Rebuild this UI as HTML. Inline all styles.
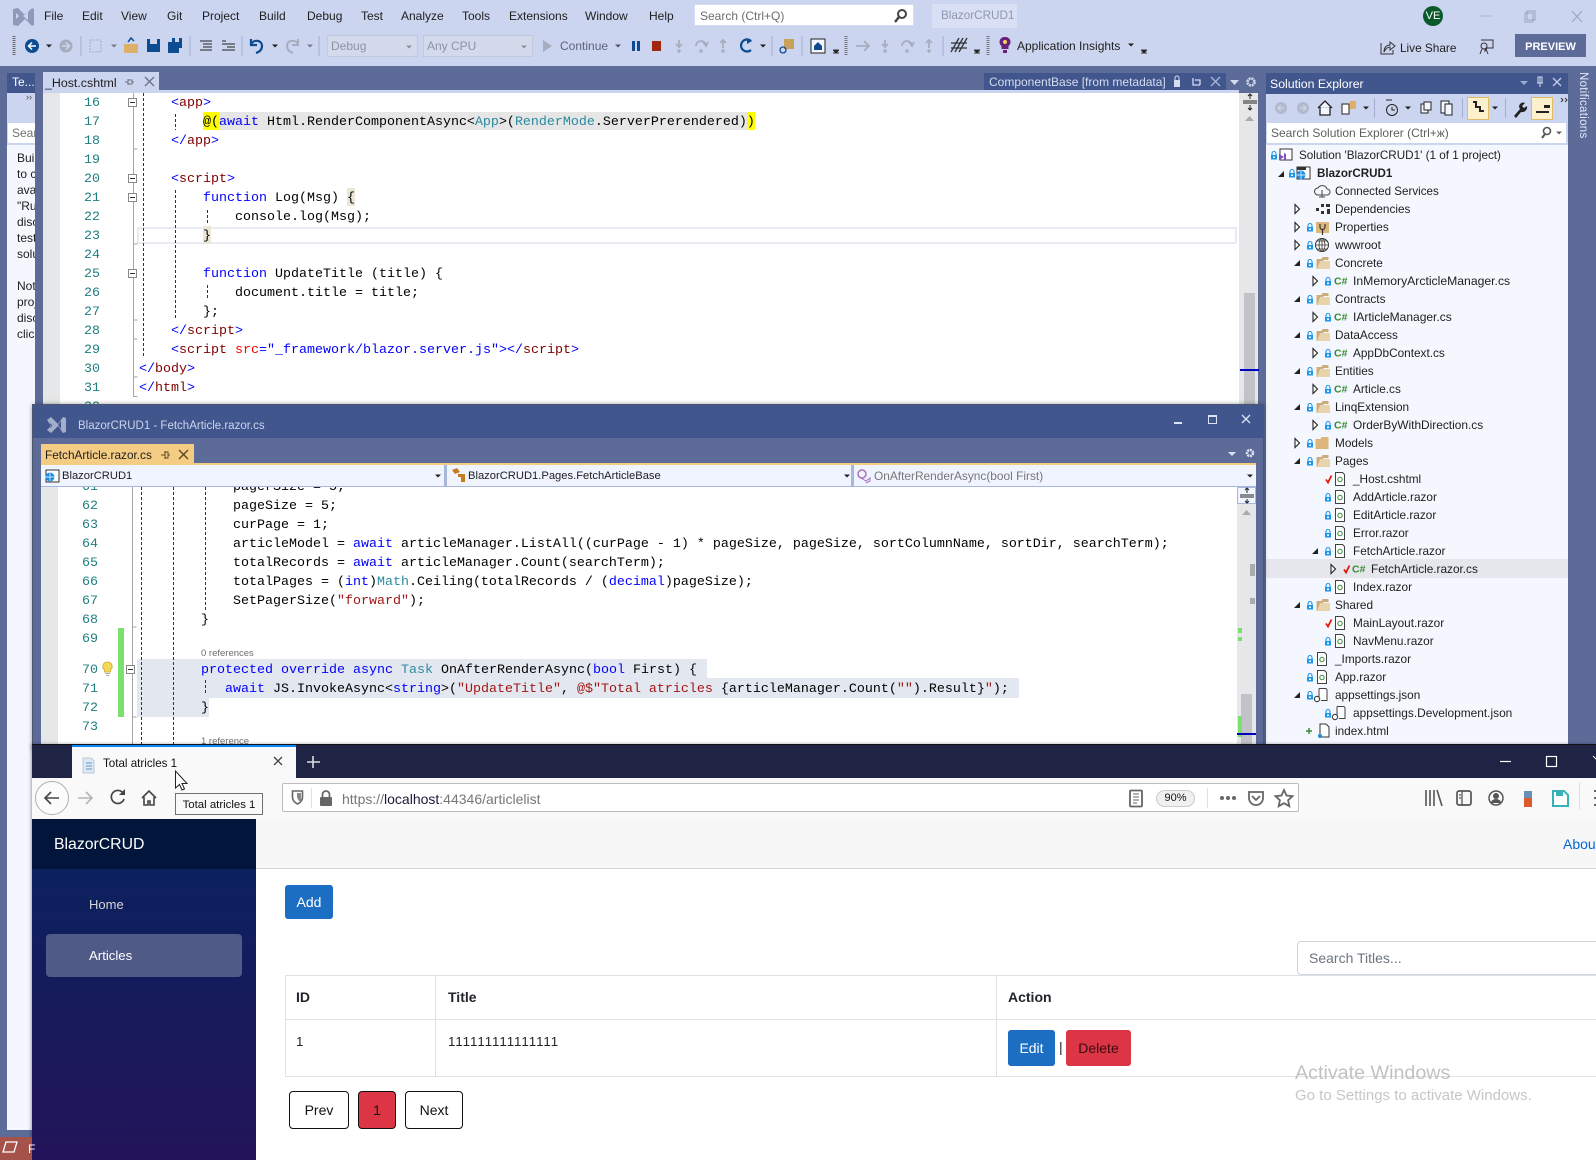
<!DOCTYPE html>
<html><head><meta charset="utf-8"><title>Total atricles 1</title>
<style>
html,body{margin:0;padding:0;width:1596px;height:1160px;overflow:hidden;background:#5d6b99}
body{position:relative;font-family:"Liberation Sans",sans-serif;font-size:12px;color:#1e1e1e}
.a{position:absolute;white-space:nowrap}
.r{position:absolute}
pre{margin:0;position:absolute;font-family:"Liberation Mono",monospace;font-size:13.33px;line-height:19px;color:#000;white-space:pre}
.n{color:#1f7f80;text-align:right}
.b{color:#0000ff}.m{color:#800000}.t{color:#2b8a9f}.s{color:#a31515}.o{color:#ff0000}
.menu{top:8px;line-height:16px;font-size:12px}
.row{position:absolute;line-height:18px;height:18px;font-size:11.8px;color:#1e1e1e;white-space:nowrap}
svg{position:absolute;left:0;top:0;overflow:visible}
.btn{position:absolute;box-sizing:border-box;text-align:center;font-size:14px}
</style></head><body>

<svg width="0" height="0" style="position:absolute">
<defs>
<symbol id="lk" overflow="visible"><path d="M-2 -1V-2.500a2 2 0 0 1 4 0V-1" fill="none" stroke="#1c97ea" stroke-width="1.100"/><rect x="-3" y="-1" width="6" height="4.500" fill="#1c97ea"/><rect x="-1" y="0.500" width="2" height="1.500" fill="#fff"/></symbol>
<symbol id="fo" overflow="visible"><path d="M-6.500 6V-4h5l1 -2h6v3h-5l-4 9z" fill="#c9ad7c"/><path d="M-6 6l3 -8h10v8z" fill="#e9d3ab"/></symbol>
<symbol id="fc" overflow="visible"><path d="M-6.500 6V-4h5l1 -2h7v12z" fill="#dcb67a"/></symbol>
<symbol id="fr" overflow="visible"><path d="M-4.500 -6.500h7l2 2v11h-9z" fill="#fff" stroke="#424242" stroke-width="1"/><circle cx="0" cy="0.500" r="2.200" fill="none" stroke="#388a34" stroke-width="1"/></symbol>
<symbol id="ao" overflow="visible"><path d="M3 -3v6h-6z" fill="#222"/></symbol>
<symbol id="ac" overflow="visible"><path d="M-2 -4.500l4.500 4.500l-4.500 4.500z" fill="#fff" stroke="#222" stroke-width="1.100"/></symbol>
<symbol id="ck" overflow="visible"><path d="M-3 0.500l2 3l3.500 -7" fill="none" stroke="#e51400" stroke-width="1.700"/></symbol>
<symbol id="dn" overflow="visible"><path d="M-3 -1.500h6l-3 3z" fill="#1e1e1e"/></symbol>
<symbol id="js" overflow="visible"><path d="M-3 -6.500h6q2 0 2 2v10h-6" fill="#fff" stroke="#424242"/><path d="M-3 -6.500v9" fill="none" stroke="#424242"/><circle cx="-5" cy="4" r="2.600" fill="#fff" stroke="#424242" stroke-width="1.200"/></symbol>
</defs>
</svg>

<!-- top chrome -->
<div class="r" style="left:0;top:0;width:1596px;height:66px;background:#ccd5f0"></div>
<div class="r" style="left:694px;top:4px;width:220px;height:22px;background:#fff;box-sizing:border-box;border:1px solid #d5dcef"></div>
<div class="r" style="left:932px;top:4px;width:85px;height:24px;background:#d9e0f6"></div>
<div class="a menu" style="left:44px">File</div>
<div class="a menu" style="left:82px">Edit</div>
<div class="a menu" style="left:121px">View</div>
<div class="a menu" style="left:167px">Git</div>
<div class="a menu" style="left:202px">Project</div>
<div class="a menu" style="left:259px">Build</div>
<div class="a menu" style="left:307px">Debug</div>
<div class="a menu" style="left:361px">Test</div>
<div class="a menu" style="left:401px">Analyze</div>
<div class="a menu" style="left:462px">Tools</div>
<div class="a menu" style="left:509px">Extensions</div>
<div class="a menu" style="left:585px">Window</div>
<div class="a menu" style="left:649px">Help</div>
<div class="a menu" style="left:700px;color:#6d6d6d">Search (Ctrl+Q)</div>
<div class="a menu" style="left:941px;color:#8f97b2;font-size:11.700px">BlazorCRUD1</div>
<div class="r" style="left:1423px;top:6px;width:20px;height:20px;border-radius:50%;background:#0b5a2b;color:#fff;text-align:center;line-height:20px;font-size:11px">VE</div>
<div class="r" style="left:327px;top:35px;width:91px;height:22px;box-sizing:border-box;background:#d3daeb;border:1px solid #c2c9da"></div>
<div class="r" style="left:423px;top:35px;width:110px;height:22px;box-sizing:border-box;background:#d3daeb;border:1px solid #c2c9da"></div>
<div class="a menu" style="left:331px;top:38px;color:#8e94a6">Debug</div>
<div class="a menu" style="left:427px;top:38px;color:#8e94a6">Any CPU</div>
<div class="a menu" style="left:560px;top:38px;color:#5d6379">Continue</div>
<div class="a menu" style="left:1017px;top:38px">Application Insights</div>
<div class="a menu" style="left:1400px;top:40px;font-size:11.800px">Live Share</div>
<div class="r" style="left:1515px;top:34px;width:71px;height:23px;background:#5d6b99;color:#fff;font-weight:bold;font-size:11px;text-align:center;line-height:26px">PREVIEW</div>

<svg width="1596" height="66">
 <path d="M12 9l5 -1l7 7l7 -7l2 1v16l-2 1l-7 -7l-7 7l-5 -1zM15 13v6l3 -3zM27 12l-5 4l5 4z" fill="#8f9abb" fill-rule="evenodd" transform="translate(1 0)"/>
 <circle cx="902" cy="14" r="4" fill="none" stroke="#444" stroke-width="2"/><path d="M899 17l-4 5" stroke="#444" stroke-width="2.400"/>
 <path d="M1480 16h11" stroke="#aab2cc"/><rect x="1525" y="13" width="8" height="9" fill="none" stroke="#9aa3c0"/><rect x="1527" y="11" width="8" height="9" fill="none" stroke="#9aa3c0"/><path d="M1572 11l10 11M1582 11l-10 11" stroke="#9aa3c0"/>
 <path d="M14 36v20" stroke="#666" stroke-dasharray="1 1" stroke-width="3"/>
 <circle cx="32" cy="46" r="7" fill="#0e4c92"/><path d="M36 46h-7M32 42.500l-3.500 3.500l3.500 3.500" fill="none" stroke="#fff" stroke-width="1.500"/>
 <use href="#dn" x="49" y="46"/>
 <circle cx="66" cy="46" r="6.500" fill="#a6adbf"/><path d="M62 46h7M66 42.500l3.500 3.500l-3.500 3.500" fill="none" stroke="#ccd5f0" stroke-width="1.500"/>
 <path d="M81 36v20M190 36v20M242 36v20M319 36v20M772 36v20M802 36v20M943 36v20" stroke="#a5add0"/>
 <rect x="90" y="40" width="11" height="12" fill="none" stroke="#a6adbf" stroke-dasharray="2 1"/>
 <use href="#dn" x="114" y="46" opacity=".5"/>
 <path d="M124 44h14v9h-14z" fill="#dcb067"/><path d="M128 42l3 -4l3 3" fill="none" stroke="#0e4c92" stroke-width="1.500"/>
 <rect x="147" y="39" width="13" height="13" fill="#0e4c92"/><rect x="150" y="39" width="7" height="5" fill="#ccd5f0"/>
 <rect x="168" y="42" width="11" height="11" fill="#0e4c92"/><rect x="172" y="38" width="10" height="10" fill="#0e4c92"/><rect x="175" y="38" width="4" height="4" fill="#ccd5f0"/>
 <path d="M200 41h12M203 44h9M203 47h9M200 50h12M222 41h4M222 44h13M227 47h8M222 50h13" stroke="#222" stroke-width="1.100"/>
 <path d="M251 39v6h6M251 44c3 -5 11 -4 11 2c0 4 -3 6 -6 7" fill="none" stroke="#0e4c92" stroke-width="2.200"/>
 <use href="#dn" x="275" y="46"/>
 <path d="M298 39v6h-6M298 44c-3 -5 -11 -4 -11 2c0 4 3 6 6 7" fill="none" stroke="#a6adbf" stroke-width="2"/>
 <use href="#dn" x="310" y="46" opacity=".5"/>
 <use href="#dn" x="409" y="47" opacity=".4"/><use href="#dn" x="524" y="47" opacity=".4"/>
 <path d="M543 40l9 6l-9 6z" fill="#a6adbf"/><use href="#dn" x="618" y="46" opacity=".7"/>
 <path d="M632 41h3v10h-3zM637 41h3v10h-3z" fill="#0e4c92"/>
 <rect x="652" y="41" width="9" height="10" fill="#a1260d"/>
 <path d="M679 40v7M676 44l3 3l3 -3M696 46a5 5 0 1 1 10 0M703 42l3 4l2 -4M723 48v-8M720 43l3 -3l3 3" stroke="#a6adbf" stroke-width="1.800" fill="none"/><circle cx="679" cy="51" r="1.700" fill="#a6adbf"/><circle cx="701" cy="51" r="1.700" fill="#a6adbf"/><circle cx="723" cy="51" r="1.700" fill="#a6adbf"/>
 <path d="M751 41a6 6 0 1 0 0 9" fill="none" stroke="#0e4c92" stroke-width="2.200"/><path d="M747 38l5 3l-5 3z" fill="#0e4c92"/>
 <use href="#dn" x="763" y="46"/>
 <rect x="784" y="39" width="10" height="10" fill="#c9a15a"/><circle cx="783" cy="50" r="3" fill="none" stroke="#0e4c92" stroke-width="1.300"/>
 <rect x="811" y="39" width="14" height="14" fill="#f3f6ff" stroke="#222"/><path d="M814 46l4 -4l4 4v4h-8z" fill="#0e4c92"/>
 <path d="M833 50h6M833 53h6" stroke="#333"/><path d="M833 50.500h6l-3 3z" fill="#222"/>
 <path d="M846 36v20M988 36v20" stroke="#777" stroke-dasharray="1 1" stroke-width="3"/>
 <path d="M856 46h13M864 41l5 5l-5 5M885 40v7M882 44l3 3l3 -3M902 46a5 5 0 1 1 10 0M909 42l3 4l2 -4M929 48v-8M926 43l3 -3l3 3" fill="none" stroke="#a6adbf" stroke-width="1.800"/><circle cx="885" cy="51" r="1.700" fill="#a6adbf"/><circle cx="907" cy="51" r="1.700" fill="#a6adbf"/><circle cx="929" cy="51" r="1.700" fill="#a6adbf"/>
 <path d="M951 52l8 -14M955 52l8 -14M959 52l8 -14M951 43h16M951 48h16" stroke="#333" stroke-width="1.300"/>
 <path d="M974 50h6M974 53h6" stroke="#333"/><path d="M974 50.500h6l-3 3z" fill="#222"/>
 <path d="M1005 37a5 5 0 0 1 3.500 9v3h-7v-3a5 5 0 0 1 3.500 -9z" fill="#68217a"/><circle cx="1005" cy="42" r="2" fill="#f0d060"/><rect x="1003" y="50" width="4" height="3" fill="#68217a"/>
 <use href="#dn" x="1131" y="45"/><path d="M1141 50h6M1141 53h6" stroke="#333"/><path d="M1141 50.500h6l-3 3z" fill="#222"/>
 <path d="M1381 43v11h12v-4M1384 52c0 -5 3 -7 6 -7v-3l5 4l-5 4v-3c-2 0 -4 1 -6 5z" fill="none" stroke="#333"/>
 <path d="M1481 40h12v8h-6l-2 3v-3" fill="none" stroke="#333"/><circle cx="1484" cy="46" r="3" fill="#ccd5f0" stroke="#333"/><path d="M1480 54l2 -5M1488 54l-2 -5" stroke="#333"/>
</svg>

<!-- left tool window -->
<div class="r" style="left:7px;top:73px;width:28px;height:20px;background:#40568d;color:#fff;line-height:19px;text-indent:5px;font-size:12px">Te...</div>
<div class="r" style="left:7px;top:93px;width:28px;height:1037px;background:#f5f7ff"></div>
<div class="r" style="left:7px;top:93px;width:28px;height:52px;background:#ccd5f0"></div>
<div class="a" style="left:26px;top:92px;font-size:9px;color:#444">››</div>
<div class="r" style="left:8px;top:123px;width:27px;height:20px;background:#fff;overflow:hidden;color:#717171;line-height:20px;text-indent:4px">Sear</div>
<div class="r" style="left:17px;top:150px;width:18px;overflow:hidden;line-height:16px;font-size:12px;white-space:nowrap">Build<br>to con<br>avail<br>"Run<br>disco<br>test<br>solut<br><br>Note<br>proj<br>disco<br>click</div>

<!-- main editor -->
<div class="r" style="left:43px;top:72px;width:116px;height:20px;background:#ccd5f0"></div>
<div class="a" style="left:45px;top:75px;line-height:16px;font-size:12.400px">_Host.cshtml</div>
<div class="r" style="left:43px;top:90px;width:1196px;height:3px;background:#ccd5f0"></div>
<div class="r" style="left:984px;top:73px;width:242px;height:17px;background:#40568d"></div>
<div class="a" style="left:989px;top:74px;line-height:16px;color:#d5dcf0;font-size:12px">ComponentBase [from metadata]</div>
<div class="r" style="left:43px;top:93px;width:1196px;height:320px;background:#fff"></div>
<div class="r" style="left:43px;top:93px;width:17px;height:320px;background:#e6e7e8"></div>
<div class="r" style="left:1239px;top:93px;width:19px;height:320px;background:#e6e7e8"></div>
<div class="r" style="left:1244px;top:293px;width:11px;height:120px;background:#c2c3c9"></div>
<div class="r" style="left:1240px;top:369px;width:19px;height:2px;background:#0000c0"></div>
<div class="r" style="left:137px;top:227px;width:1100px;height:17px;box-sizing:border-box;border:2px solid #eaeaf2"></div>
<div class="r" style="left:219px;top:112px;width:528px;height:18px;background:#e6e6e6"></div>
<div class="r" style="left:203px;top:112px;width:16px;height:18px;background:#ffff00"></div>
<div class="r" style="left:747px;top:112px;width:8px;height:18px;background:#ffff00"></div>
<div class="r" style="left:347px;top:188px;width:8px;height:18px;background:#ebe6d6"></div>
<div class="r" style="left:203px;top:226px;width:8px;height:18px;background:#ebe6d6"></div>
<svg width="1596" height="420">
 <path d="M133.500 93v304" fill="none" stroke="#a5a5a5"/>
 <path d="M133.500 149h4M133.500 244h4M133.500 320h4M133.500 339h4M133.500 377h4M133.500 396.500h4" fill="none" stroke="#a5a5a5"/>
 <path d="M143.500 93v263M175.500 114v16M175.500 190v128M207.500 210v13M207.500 285v15" fill="none" stroke="#333" stroke-dasharray="3 2"/>
 <g fill="#fff" stroke="#888"><rect x="128.500" y="98.500" width="8" height="8"/><rect x="128.500" y="174.500" width="8" height="8"/><rect x="128.500" y="193.500" width="8" height="8"/><rect x="128.500" y="269.500" width="8" height="8"/></g>
 <path d="M130 102.500h5M130 178.500h5M130 197.500h5M130 273.500h5" stroke="#333"/>
 <path d="M1243 101h14M1243 103h14" stroke="#222"/><path d="M1250 94v5M1250 105v5M1248 96l2 -2l2 2M1248 108l2 2l2 -2" fill="none" stroke="#222"/>
 <path d="M1245 121l4.500 -5l4.500 5z" fill="#aaa"/>
 <path d="M128 79v6M125 82h3M128 80h4v4h-4M132 82h2" fill="none" stroke="#6b7280"/>
 <path d="M145 77l9 9M154 77l-9 9" stroke="#6b7280" stroke-width="1.300"/>
 <rect x="1174" y="80" width="6" height="7" fill="#d5dcf0"/><path d="M1175 80v-2a2 2 0 0 1 4 0v2" fill="none" stroke="#d5dcf0"/>
 <path d="M1193 78v7h7M1195 80h5v5" fill="none" stroke="#d5dcf0" stroke-width="1.300"/><path d="M1211 77l9 9M1220 77l-9 9" stroke="#aab6d8" stroke-width="1.300"/>
 <path d="M1230 80h9l-4.500 5z" fill="#d5dcf0"/>
 <circle cx="1251" cy="82" r="3.500" fill="none" stroke="#d5dcf0" stroke-width="2.500" stroke-dasharray="2 .8"/>
</svg>
<pre class="n" style="left:60px;top:94px;width:40px">16
17
18
19
20
21
22
23
24
25
26
27
28
29
30
31
32</pre>
<pre style="left:139px;top:94px">    <span class="b">&lt;</span><span class="m">app</span><span class="b">&gt;</span>
        @(<span class="b">await</span> Html.RenderComponentAsync&lt;<span class="t">App</span>&gt;(<span class="t">RenderMode</span>.ServerPrerendered))
    <span class="b">&lt;/</span><span class="m">app</span><span class="b">&gt;</span>

    <span class="b">&lt;</span><span class="m">script</span><span class="b">&gt;</span>
        <span class="b">function</span> Log(Msg) {
            console.log(Msg);
        }

        <span class="b">function</span> UpdateTitle (title) {
            document.title = title;
        };
    <span class="b">&lt;/</span><span class="m">script</span><span class="b">&gt;</span>
    <span class="b">&lt;</span><span class="m">script</span> <span class="o">src</span><span class="b">="_framework/blazor.server.js"&gt;&lt;/</span><span class="m">script</span><span class="b">&gt;</span>
<span class="b">&lt;/</span><span class="m">body</span><span class="b">&gt;</span>
<span class="b">&lt;/</span><span class="m">html</span><span class="b">&gt;</span></pre>

<!-- Solution Explorer -->
<div class="r" style="left:1266px;top:73px;width:302px;height:21px;background:#40568d"></div>
<div class="a" style="left:1270px;top:76px;line-height:16px;color:#fff;font-size:12.300px">Solution Explorer</div>
<div class="r" style="left:1266px;top:94px;width:302px;height:51px;background:#ccd5f0"></div>
<div class="r" style="left:1267px;top:123px;width:299px;height:20px;background:#fff"></div>
<div class="a" style="left:1271px;top:125px;line-height:16px;color:#5f5f5f;font-size:12px">Search Solution Explorer (Ctrl+ж)</div>
<div class="r" style="left:1266px;top:145px;width:302px;height:600px;background:#f5f7ff"></div>
<div class="r" style="left:1266px;top:559px;width:302px;height:19px;background:#e6e7ed"></div>
<div class="a" style="left:1577px;top:72px;height:68px;line-height:12px;writing-mode:vertical-rl;color:#e4e9fb;font-size:11.500px;letter-spacing:.3px">Notifications</div>
<svg width="1596" height="750">
 <path d="M1520 81h8l-4 4z" fill="#9eabd0"/><path d="M1540 77v10M1537 83h6M1538 77h4v6h-4z" fill="none" stroke="#d5dcf0"/><path d="M1553 78l8 8M1561 78l-8 8" stroke="#c5cee8" stroke-width="1.300"/>
 <circle cx="1281" cy="108" r="6" fill="#b2b9cb"/><path d="M1284 108h-6M1281 105l-3 3l3 3" fill="none" stroke="#ccd5f0" stroke-width="1.300"/><circle cx="1303" cy="108" r="6" fill="#b2b9cb"/><path d="M1300 108h6M1303 105l3 3l-3 3" fill="none" stroke="#ccd5f0" stroke-width="1.300"/>
 <path d="M1318 108l7 -7l7 7M1320 107v8h10v-8" fill="#f5f7ff" stroke="#222" stroke-width="1.300"/>
 <rect x="1342" y="104" width="7" height="10" fill="#fff" stroke="#222"/><rect x="1350" y="101" width="6" height="8" fill="#dcb067"/>
 <use href="#dn" x="1366" y="108"/><path d="M1374.500 98v20M1462.500 98v20M1505.500 98v20" stroke="#a5add0"/>
 <circle cx="1392" cy="110" r="5.500" fill="none" stroke="#222"/><path d="M1392 107v3h3M1386 100h6" fill="none" stroke="#222"/>
 <use href="#dn" x="1408" y="108"/>
 <rect x="1421" y="104" width="7" height="9" fill="#f5f7ff" stroke="#222"/><rect x="1424" y="102" width="7" height="8" fill="#f5f7ff" stroke="#222"/>
 <rect x="1441" y="101" width="8" height="12" fill="#f5f7ff" stroke="#222"/><rect x="1445" y="104" width="7" height="11" fill="#f5f7ff" stroke="#222"/>
 <rect x="1467.500" y="97.500" width="21" height="22" fill="#fdf0cc" stroke="#e3bb64"/><path d="M1473 102h3v5h4v4h4" fill="none" stroke="#222" stroke-width="2"/>
 <use href="#dn" x="1495" y="108"/>
 <path d="M1514 116l6 -7a4 4 0 0 1 5 -6l-3 3l2 2l3 -2a5 5 0 0 1 -6 6l-5 6z" fill="#222"/>
 <rect x="1531.500" y="97.500" width="21" height="22" fill="#fdf0cc" stroke="#e3bb64"/><path d="M1536 111h13v2h-13zM1544 105h6v3h-6z" fill="#222"/>
 <path d="M1561 100l2 2l-2 2M1565 100l2 2l-2 2" fill="none" stroke="#333" transform="translate(0 -2)"/>
 <circle cx="1547" cy="131" r="3.500" fill="none" stroke="#555" stroke-width="1.600"/><path d="M1545 134l-3 4" stroke="#555" stroke-width="2"/><use href="#dn" x="1559" y="133" opacity=".7"/>

 <!-- tree icons -->
 <g>
 <use href="#lk" x="1274" y="156"/><rect x="1280" y="149" width="12" height="11" fill="#fff" stroke="#333"/><path d="M1279 154l5 3l-5 3zM1284 153l2 1v6l-2 1z" fill="#7e4fbf"/>
 <use href="#ao" x="1281" y="174"/><use href="#lk" x="1292" y="174"/><rect x="1297" y="167" width="13" height="12" fill="#fff" stroke="#333"/><rect x="1297" y="167" width="9" height="3" fill="#333"/><circle cx="1301" cy="175" r="4.500" fill="#1c8ee0"/><path d="M1297 175h9M1301 171v8" stroke="#fff" stroke-width=".7"/>
 <path d="M1318 195h9a3 3 0 0 0 0 -6a5 5 0 0 0 -9 -1a3.500 3.500 0 0 0 0 7z" fill="#f5f7ff" stroke="#444"/><path d="M1322 190v7M1319 197h6" stroke="#444"/>
 <use href="#ac" x="1297" y="209"/><path d="M1316 208h3v3h-3zM1321 204h3v3h-3zM1326 204h4v3h-4zM1321 211h3v3h-3zM1327 209h3v5h-3z" fill="#333"/>
 <use href="#ac" x="1297" y="227"/><use href="#lk" x="1310" y="228"/><path d="M1316 222h13v11h-13z" fill="#dcb67a"/><path d="M1320 224v3a2.500 2.500 0 0 0 5 0v-3M1322.500 230v5" fill="none" stroke="#333" stroke-width="1.200"/>
 <use href="#ac" x="1297" y="245"/><use href="#lk" x="1310" y="246"/><circle cx="1322" cy="245" r="6.500" fill="#fff" stroke="#333"/><path d="M1315.500 245h13M1322 238.500v13M1317 241h10M1317 249h10" stroke="#333" stroke-width=".8"/><ellipse cx="1322" cy="245" rx="3" ry="6.500" fill="none" stroke="#333" stroke-width=".8"/>
 <use href="#ao" x="1297" y="263"/><use href="#lk" x="1310" y="264"/><use href="#fo" x="1323" y="263"/>
 <use href="#ac" x="1315" y="281"/><use href="#lk" x="1328" y="282"/>
 <use href="#ao" x="1297" y="299"/><use href="#lk" x="1310" y="300"/><use href="#fo" x="1323" y="299"/>
 <use href="#ac" x="1315" y="317"/><use href="#lk" x="1328" y="318"/>
 <use href="#ao" x="1297" y="335"/><use href="#lk" x="1310" y="336"/><use href="#fo" x="1323" y="335"/>
 <use href="#ac" x="1315" y="353"/><use href="#lk" x="1328" y="354"/>
 <use href="#ao" x="1297" y="371"/><use href="#lk" x="1310" y="372"/><use href="#fo" x="1323" y="371"/>
 <use href="#ac" x="1315" y="389"/><use href="#lk" x="1328" y="390"/>
 <use href="#ao" x="1297" y="407"/><use href="#lk" x="1310" y="408"/><use href="#fo" x="1323" y="407"/>
 <use href="#ac" x="1315" y="425"/><use href="#lk" x="1328" y="426"/>
 <use href="#ac" x="1297" y="443"/><use href="#lk" x="1310" y="444"/><use href="#fc" x="1322" y="443"/>
 <use href="#ao" x="1297" y="461"/><use href="#lk" x="1310" y="462"/><use href="#fo" x="1323" y="461"/>
 <use href="#ck" x="1329" y="479"/><use href="#fr" x="1340" y="479"/>
 <use href="#lk" x="1328" y="498"/><use href="#fr" x="1340" y="497"/>
 <use href="#lk" x="1328" y="516"/><use href="#fr" x="1340" y="515"/>
 <use href="#lk" x="1328" y="534"/><use href="#fr" x="1340" y="533"/>
 <use href="#ao" x="1315" y="551"/><use href="#lk" x="1328" y="552"/><use href="#fr" x="1340" y="551"/>
 <use href="#ac" x="1333" y="569"/><use href="#ck" x="1347" y="569"/>
 <use href="#lk" x="1328" y="588"/><use href="#fr" x="1340" y="587"/>
 <use href="#ao" x="1297" y="605"/><use href="#lk" x="1310" y="606"/><use href="#fo" x="1323" y="605"/>
 <use href="#ck" x="1329" y="623"/><use href="#fr" x="1340" y="623"/>
 <use href="#lk" x="1328" y="642"/><use href="#fr" x="1340" y="641"/>
 <use href="#lk" x="1310" y="660"/><use href="#fr" x="1322" y="659"/>
 <use href="#lk" x="1310" y="678"/><use href="#fr" x="1322" y="677"/>
 <use href="#ao" x="1297" y="695"/><use href="#lk" x="1310" y="696"/><use href="#js" x="1322" y="695"/>
 <use href="#lk" x="1328" y="714"/><use href="#js" x="1340" y="713"/>
 <path d="M1306 731h6M1309 728v6" stroke="#388a34" stroke-width="1.400"/><path d="M1320 724h6l3 3v10h-9z" fill="#fff" stroke="#333"/><circle cx="1320" cy="736" r="2" fill="#1c8ee0"/>
 <g font-family="Liberation Sans,sans-serif" font-weight="bold" font-size="10.500" fill="#388a34">
  <text x="1334" y="284.500">C#</text><text x="1334" y="320.500">C#</text><text x="1334" y="356.500">C#</text><text x="1334" y="392.500">C#</text><text x="1334" y="428.500">C#</text><text x="1352" y="572.500">C#</text>
 </g>
 </g>
</svg>
<div class="row" style="left:1299px;top:147px;font-size:11.700px">Solution 'BlazorCRUD1' (1 of 1 project)</div>
<div class="row" style="left:1317px;top:165px;font-weight:bold;font-size:11.600px">BlazorCRUD1</div>
<div class="row" style="left:1335px;top:183px;font-size:11.600px">Connected Services</div>
<div class="row" style="left:1335px;top:200px">Dependencies</div>
<div class="row" style="left:1335px;top:218px">Properties</div>
<div class="row" style="left:1335px;top:236px">wwwroot</div>
<div class="row" style="left:1335px;top:254px">Concrete</div>
<div class="row" style="left:1353px;top:272px;font-size:12.200px">InMemoryArcticleManager.cs</div>
<div class="row" style="left:1335px;top:290px">Contracts</div>
<div class="row" style="left:1353px;top:308px;font-size:12px">IArticleManager.cs</div>
<div class="row" style="left:1335px;top:326px">DataAccess</div>
<div class="row" style="left:1353px;top:344px">AppDbContext.cs</div>
<div class="row" style="left:1335px;top:362px">Entities</div>
<div class="row" style="left:1353px;top:380px">Article.cs</div>
<div class="row" style="left:1335px;top:398px">LinqExtension</div>
<div class="row" style="left:1353px;top:416px;font-size:11.900px">OrderByWithDirection.cs</div>
<div class="row" style="left:1335px;top:434px">Models</div>
<div class="row" style="left:1335px;top:452px">Pages</div>
<div class="row" style="left:1353px;top:470px">_Host.cshtml</div>
<div class="row" style="left:1353px;top:488px">AddArticle.razor</div>
<div class="row" style="left:1353px;top:506px">EditArticle.razor</div>
<div class="row" style="left:1353px;top:524px">Error.razor</div>
<div class="row" style="left:1353px;top:542px">FetchArticle.razor</div>
<div class="row" style="left:1371px;top:560px">FetchArticle.razor.cs</div>
<div class="row" style="left:1353px;top:578px">Index.razor</div>
<div class="row" style="left:1335px;top:596px">Shared</div>
<div class="row" style="left:1353px;top:614px">MainLayout.razor</div>
<div class="row" style="left:1353px;top:632px">NavMenu.razor</div>
<div class="row" style="left:1335px;top:650px">_Imports.razor</div>
<div class="row" style="left:1335px;top:668px">App.razor</div>
<div class="row" style="left:1335px;top:686px">appsettings.json</div>
<div class="row" style="left:1353px;top:704px;font-size:11.900px">appsettings.Development.json</div>
<div class="row" style="left:1335px;top:722px">index.html</div>

<!-- second VS window -->
<div class="r" style="left:33px;top:405px;width:1230px;height:345px;background:#5d6b99;box-shadow:0 0 5px rgba(0,0,0,.55);outline:1px solid #4a5570"></div>
<div class="r" style="left:33px;top:405px;width:1230px;height:33px;background:#40568d"></div>
<div class="a" style="left:78px;top:418px;line-height:16px;color:#ccd4ec;font-size:11.500px">BlazorCRUD1 - FetchArticle.razor.cs</div>
<div class="r" style="left:41px;top:444px;width:153px;height:19px;background:#f5cc84"></div>
<div class="a" style="left:45px;top:447px;line-height:16px;font-size:11.800px">FetchArticle.razor.cs</div>
<div class="r" style="left:41px;top:463px;width:1215px;height:2px;background:#f5cc84"></div>
<div class="r" style="left:41px;top:465px;width:1215px;height:21px;background:#f0f4ff;border-bottom:1px solid #a8b8dc"></div>
<div class="r" style="left:444px;top:465px;width:3px;height:21px;background:#a8b8dc"></div>
<div class="r" style="left:851px;top:465px;width:3px;height:21px;background:#a8b8dc"></div>
<div class="a" style="left:62px;top:468px;line-height:16px;font-size:11.200px">BlazorCRUD1</div>
<div class="a" style="left:468px;top:468px;line-height:16px;font-size:11.200px">BlazorCRUD1.Pages.FetchArticleBase</div>
<div class="a" style="left:874px;top:468px;line-height:16px;font-size:11.900px;color:#777">OnAfterRenderAsync(bool First)</div>
<div class="r" style="left:41px;top:487px;width:1215px;height:263px;background:#fff;overflow:hidden" id="ed2">
 <div class="r" style="left:0;top:0;width:17px;height:263px;background:#e6e7e8"></div>
 <div class="r" style="left:96px;top:172px;width:570px;height:19px;background:#e3e8f0"></div>
 <div class="r" style="left:96px;top:191px;width:882px;height:20px;background:#e3e8f0"></div>
 <div class="r" style="left:96px;top:211px;width:72px;height:19px;background:#e3e8f0"></div>
 <div class="r" style="left:77px;top:141px;width:6px;height:89px;background:#7be06f"></div>
 <div class="r" style="left:1196px;top:0;width:19px;height:263px;background:#e6e7e8"></div>
 <div class="r" style="left:1200px;top:207px;width:11px;height:56px;background:#c2c3c9"></div>
 <div class="r" style="left:1209px;top:77px;width:5px;height:12px;background:#acacac"></div>
 <div class="r" style="left:1209px;top:111px;width:5px;height:6px;background:#acacac"></div>
 <div class="r" style="left:1197px;top:141px;width:4px;height:5px;background:#7be06f"></div>
 <div class="r" style="left:1197px;top:150px;width:4px;height:4px;background:#7be06f"></div>
 <div class="r" style="left:1197px;top:229px;width:4px;height:21px;background:#7be06f"></div>
 <div class="r" style="left:1196px;top:246px;width:19px;height:2px;background:#0000c0"></div>
 <div class="r" style="left:1196px;top:0;width:19px;height:17px;background:#f0f4ff;box-sizing:border-box;border:1px solid #a8b8dc"></div>
 <pre class="n" style="left:17px;top:-9.500px;width:40px">61
62
63
64
65
66
67
68
69</pre>
 <pre class="n" style="left:17px;top:173.500px;width:40px">70
71
72
73</pre>
 <pre style="left:96px;top:-9.500px">            pagerSize = 5;
            pageSize = 5;
            curPage = 1;
            articleModel = <span class="b">await</span> articleManager.ListAll((curPage - 1) * pageSize, pageSize, sortColumnName, sortDir, searchTerm);
            totalRecords = <span class="b">await</span> articleManager.Count(searchTerm);
            totalPages = (<span class="b">int</span>)<span class="t">Math</span>.Ceiling(totalRecords / (<span class="b">decimal</span>)pageSize);
            SetPagerSize(<span class="s">"forward"</span>);
        }</pre>
 <pre style="left:96px;top:173.500px">        <span class="b">protected</span> <span class="b">override</span> <span class="b">async</span> <span class="t">Task</span> OnAfterRenderAsync(<span class="b">bool</span> First) {
           <span class="b">await</span> JS.InvokeAsync&lt;<span class="b">string</span>&gt;(<span class="s">"UpdateTitle"</span>, <span class="s">@$"Total atricles </span>{articleManager.Count(<span class="s">""</span>).Result}<span class="s">"</span>);
        }</pre>
 <div class="a" style="left:160px;top:161px;font-size:9.500px;line-height:12px;color:#6d6d6d">0 references</div>
 <div class="a" style="left:160px;top:249px;font-size:9.500px;line-height:12px;color:#6d6d6d">1 reference</div>
</div>
<svg width="1596" height="750">
 <path d="M47 420l4 -3l7 7l5 -7l3 1v14l-3 1l-5 -7l-7 7l-4 -3l4 -4zM50 423v5l2.500 -2.500zM61 421l-3 4l3 4z" fill="#a3aeca" fill-rule="evenodd"/>
 <path d="M1174 422h8v2h-8z" fill="#dce3f5"/><rect x="1208.500" y="415.500" width="8" height="8" fill="none" stroke="#dce3f5"/><rect x="1208" y="415" width="9" height="2" fill="#dce3f5"/><path d="M1242 415l8 8M1250 415l-8 8" stroke="#dce3f5" stroke-width="1.300"/>
 <path d="M1228 452h8l-4 4z" fill="#dce3f5"/><circle cx="1250" cy="453" r="3" fill="none" stroke="#dce3f5" stroke-width="2.500" stroke-dasharray="2 .7"/>
 <path d="M165 451v8M161 455h4M165 452h3v6h-3M168 455h2" fill="none" stroke="#5a4a20"/><path d="M179 450l9 9M188 450l-9 9" stroke="#5a4a20" stroke-width="1.400"/>
 <rect x="46" y="470" width="13" height="12" fill="#fff" stroke="#333"/><circle cx="50" cy="477" r="4.500" fill="#1c8ee0"/><path d="M45.500 477h9M50 472.500v9" stroke="#fff" stroke-width=".7"/>
 <use href="#dn" x="438" y="476"/><use href="#dn" x="847" y="476"/><use href="#dn" x="1250" y="476"/>
 <path d="M452 470l5 -2l3 4l-5 2zM458 474h7v8h-4v-5h-3z" fill="#c67b1f"/>
 <circle cx="862" cy="474" r="4" fill="none" stroke="#a86fc0" stroke-width="1.500"/><path d="M861 478l5 3l4 -3v3l-4 2" fill="none" stroke="#a86fc0"/>
 <path d="M132.500 487v258" fill="none" stroke="#a5a5a5"/><path d="M132.500 627h4M132.500 717h4" fill="none" stroke="#a5a5a5"/>
 <path d="M141.500 487v258M173.500 487v258M205.500 487v123M205.500 680v15" fill="none" stroke="#333" stroke-dasharray="3 2"/>
 <rect x="126.500" y="665.500" width="8" height="8" fill="#fff" stroke="#888"/><path d="M128 669.500h5" stroke="#333"/>
 <path d="M107.500 662a4.500 4.500 0 0 1 3 8v2h-6v-2a4.500 4.500 0 0 1 3 -8z" fill="#f5d75a" stroke="#c8a830" stroke-width=".8"/><path d="M105 673.500h5M106 675.500h3" stroke="#aaa"/>
 <path d="M1240 495h14M1240 497h14" stroke="#222"/><path d="M1247 488v5M1247 499v4M1245 490l2 -2l2 2M1245 501l2 2l2 -2" fill="none" stroke="#222"/>
 <path d="M1242 515l4.500 -5l4.500 5z" fill="#aaa"/>
</svg>

<!-- browser -->
<div class="r" style="left:32px;top:744px;width:1564px;height:416px;background:#fff;box-shadow:-1px 0 3px rgba(0,0,0,.35);overflow:hidden">
 <div class="r" style="left:0;top:0;width:1564px;height:34px;background:#1f2445;border-top:1px solid #111"></div>
 <div class="r" style="left:40px;top:1px;width:224px;height:33px;background:#f9f9fa;box-sizing:border-box;border-top:2px solid #0a84ff"></div>
 <div class="a" style="left:71px;top:12px;line-height:16px;font-size:11.600px;color:#111">Total atricles 1</div>
 <div class="r" style="left:0;top:34px;width:1564px;height:41px;background:#f9f9fa;border-bottom:1px solid #dcdcde"></div>
 <div class="r" style="left:250px;top:39px;width:1017px;height:29px;background:#fff;box-sizing:border-box;border:1px solid #bdbdbf;border-radius:2px"></div>
 <div class="a" style="left:310px;top:47px;line-height:16px;font-size:14px;color:#777">https://<span style="color:#1a1a3a">localhost</span>:44346/articlelist</div>
 <div class="r" style="left:1124px;top:46px;width:39px;height:17px;box-sizing:border-box;border:1px solid #ccc;border-radius:9px;background:#f0f0f0;text-align:center;font-size:11px;line-height:15px;color:#111">90%</div>
 <!-- sidebar -->
 <div class="r" style="left:0;top:75px;width:224px;height:341px;background:linear-gradient(180deg,#08235f 0%,#23145a 100%)"></div>
 <div class="r" style="left:0;top:75px;width:224px;height:50px;background:#02153a"></div>
 <div class="a" style="left:22px;top:91px;line-height:20px;font-size:15.800px;color:#fff">BlazorCRUD</div>
 <div class="a" style="left:57px;top:153px;line-height:16px;font-size:13px;color:#d7d7d7">Home</div>
 <div class="r" style="left:14px;top:190px;width:196px;height:43px;background:#4f5a87;border-radius:4px"></div>
 <div class="a" style="left:57px;top:204px;line-height:16px;font-size:13.200px;color:#fff">Articles</div>
 <div class="r" style="left:224px;top:75px;width:1340px;height:49px;background:#f7f7f7;border-bottom:1px solid #d6d5d5"></div>
 <div class="a" style="left:1531px;top:91px;line-height:18px;font-size:14px;color:#0366d6">About</div>
 <div class="btn" style="left:253px;top:141px;width:48px;height:34px;background:#1b6ec2;border-radius:3px;color:#fff;line-height:35px">Add</div>
 <div class="r" style="left:1265px;top:197px;width:320px;height:34px;box-sizing:border-box;border:1px solid #ced4da;border-radius:4px;background:#fff"></div>
 <div class="a" style="left:1277px;top:206px;line-height:16px;font-size:14px;color:#6c757d">Search Titles...</div>
 <!-- table -->
 <div class="r" style="left:253px;top:231px;width:1311px;height:1px;background:#dee2e6"></div>
 <div class="r" style="left:253px;top:275px;width:1311px;height:1px;background:#dee2e6"></div>
 <div class="r" style="left:253px;top:332px;width:1311px;height:1px;background:#dee2e6"></div>
 <div class="r" style="left:253px;top:231px;width:1px;height:102px;background:#dee2e6"></div>
 <div class="r" style="left:403px;top:231px;width:1px;height:102px;background:#dee2e6"></div>
 <div class="r" style="left:964px;top:231px;width:1px;height:102px;background:#dee2e6"></div>
 <div class="a" style="left:264px;top:245px;line-height:16px;font-size:14px;font-weight:bold;color:#212529">ID</div>
 <div class="a" style="left:416px;top:245px;line-height:16px;font-size:14px;font-weight:bold;color:#212529">Title</div>
 <div class="a" style="left:976px;top:245px;line-height:16px;font-size:14px;font-weight:bold;color:#212529">Action</div>
 <div class="a" style="left:264px;top:290px;line-height:16px;font-size:13.300px;color:#212529">1</div>
 <div class="a" style="left:416px;top:290px;line-height:16px;font-size:13.300px;letter-spacing:.93px;color:#212529"><span>11111</span><span>11111</span><span>11111</span></div>
 <div class="btn" style="left:976px;top:286px;width:47px;height:36px;background:#1b6ec2;border-radius:3px;color:#fff;line-height:37px">Edit</div>
 <div class="a" style="left:1027px;top:295px;line-height:16px;font-size:14px;color:#212529">|</div>
 <div class="btn" style="left:1034px;top:286px;width:65px;height:36px;background:#dc3545;border-radius:3px;color:#3b0b10;line-height:37px">Delete</div>
 <div class="btn" style="left:257px;top:347px;width:60px;height:38px;border:1px solid #111;border-radius:4px;background:#fff;color:#111;line-height:36px">Prev</div>
 <div class="btn" style="left:326px;top:347px;width:38px;height:38px;border:1px solid #111;border-radius:4px;background:#dc3545;color:#111;line-height:36px">1</div>
 <div class="btn" style="left:373px;top:347px;width:58px;height:38px;border:1px solid #111;border-radius:4px;background:#fff;color:#111;line-height:36px">Next</div>
</div>
<svg width="1596" height="850">
 <path d="M83 758h8l3 3v12h-11z" fill="#dfe7f0" stroke="#b9c9dc"/><path d="M86 763h6M86 766h6M86 769h6" stroke="#5a9bd5"/>
 <path d="M274 757l8 8M282 757l-8 8" stroke="#444" stroke-width="1.300"/>
 <path d="M306 763v-12M300 757h13" stroke="#ddd" stroke-width="1.600" transform="translate(7 5)"/>
 <path d="M1500 761.500h11" stroke="#fff" stroke-width="1.200"/><rect x="1546.500" y="756.500" width="10" height="10" fill="none" stroke="#fff" stroke-width="1.200"/><path d="M1593 756l6 6" stroke="#fff"/>
 <circle cx="52" cy="798" r="16.500" fill="#fbfbfb" stroke="#b0b0b0"/><path d="M59 798h-14M51 792l-6 6l6 6" fill="none" stroke="#444" stroke-width="1.600"/>
 <path d="M92 798h-14M86 792l6 6l-6 6" fill="none" stroke="#b5b5b5" stroke-width="1.600"/>
 <path d="M123 793a6.500 6.500 0 1 0 1 6" fill="none" stroke="#444" stroke-width="1.700"/><path d="M125 789v6h-6z" fill="#444"/>
 <path d="M142 798l7 -7l7 7M144 797v8h4v-4h2v4h4v-8" fill="none" stroke="#444" stroke-width="1.600"/>
 <path d="M296.500 791h10v6c0 4 -3 6 -5 7c-2 -1 -5 -3 -5 -7z" fill="none" stroke="#666" stroke-width="1.600" transform="translate(-4 0)"/><path d="M297 793h4v9c-2 -1 -4 -3 -4 -6z" fill="#888"/>
 <path d="M311.500 788v20M1207.500 788v20" stroke="#e0e0e0"/>
 <rect x="320" y="797" width="12" height="9" rx="1" fill="#666"/><path d="M322.500 797v-2.500a3.500 3.500 0 0 1 7 0v2.500" fill="none" stroke="#666" stroke-width="1.700"/>
 <rect x="1130" y="790.500" width="12" height="16" rx="1" fill="none" stroke="#666" stroke-width="1.800"/><path d="M1133 794h6M1133 797h6M1133 800h6M1133 803h4" stroke="#666"/>
 <circle cx="1222" cy="798" r="2" fill="#666"/><circle cx="1228" cy="798" r="2" fill="#666"/><circle cx="1234" cy="798" r="2" fill="#666"/>
 <path d="M1249 792h14v6a7 7 0 0 1 -14 0z" fill="none" stroke="#666" stroke-width="1.800"/><path d="M1252 796l4 4l4 -4" fill="none" stroke="#666" stroke-width="1.800"/>
 <path d="M1284 790l2.500 5.500l6 .7l-4.400 4l1.200 6l-5.300 -3l-5.300 3l1.200 -6l-4.400 -4l6 -.7z" fill="none" stroke="#666" stroke-width="1.800"/>
 <path d="M1426 790v16M1430 790v16M1434 790v16M1437 790l5 16" stroke="#555" stroke-width="1.600"/>
 <rect x="1457" y="791" width="14" height="14" rx="2" fill="none" stroke="#555" stroke-width="1.700"/><path d="M1462 791v14M1459 795h2M1459 798h2" stroke="#555" stroke-width="1.300"/>
 <circle cx="1496" cy="798" r="7" fill="none" stroke="#555" stroke-width="1.500"/><circle cx="1496" cy="796" r="3" fill="#555"/><path d="M1491 803a5 4 0 0 1 10 0" fill="#555"/>
 <rect x="1524" y="791" width="8" height="7" fill="#6a8fb5"/><rect x="1524" y="798" width="8" height="9" fill="#dc5a2c"/>
 <path d="M1553 791h11l4 4v11h-15z" fill="#fff" stroke="#38b2b8" stroke-width="2"/><rect x="1556" y="791" width="7" height="5" fill="#38b2b8"/>
 <path d="M1579.500 782v28" stroke="#e0e0e0"/><path d="M1594 791h3M1594 798h3M1594 805h3" stroke="#666" stroke-width="2"/>
</svg>
<!-- tooltip, cursor -->
<div class="r" style="left:175px;top:793px;width:88px;height:22px;box-sizing:border-box;background:#f9f9fa;border:1px solid #707070;line-height:22px;font-size:11.400px;text-align:center;color:#111">Total atricles 1</div>
<svg width="1596" height="800"><path d="M175.500 771v17l4 -3.500l2.500 5.500l2.500 -1l-2.500 -5.500h5z" fill="#fff" stroke="#222"/></svg>

<!-- left bottom -->
<div class="r" style="left:0;top:1137px;width:32px;height:23px;background:#a5524a;overflow:hidden"></div>
<div class="a" style="left:28px;top:1141px;color:#fff;line-height:16px">F</div>
<svg width="40" height="1160"><path d="M6 1142h11l-3 10h-11z" fill="none" stroke="#fff" stroke-width="1.300"/></svg>

<!-- activation watermark -->
<div class="a" style="left:1295px;top:1062px;line-height:22px;font-size:19.700px;color:#c2c2c2">Activate Windows</div>
<div class="a" style="left:1295px;top:1088px;line-height:16px;font-size:15px;color:#c6c6c6">Go to Settings to activate Windows.</div>
</body></html>
